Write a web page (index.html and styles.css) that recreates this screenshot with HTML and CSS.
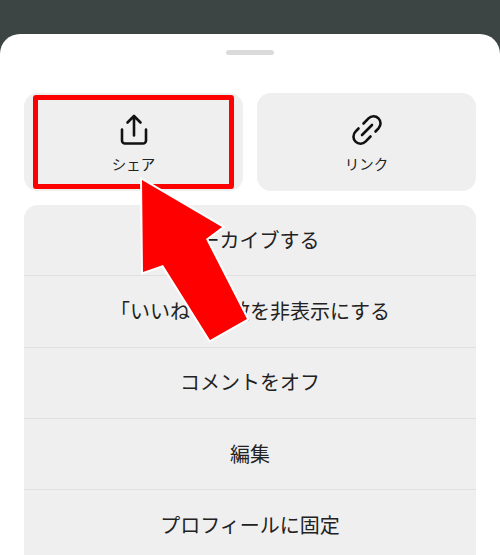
FILE: index.html
```html
<!DOCTYPE html>
<html lang="ja">
<head>
    <meta charset="UTF-8">
    <meta name="viewport" content="width=device-width, initial-scale=1.0">
    <title>シェア</title>
    <link rel="stylesheet" href="styles.css">
</head>
<body>
    <div class="sheet">
        <div class="handle"></div>
        <div class="actions">
            <div class="action">
                <svg class="action-icon" viewBox="0 0 32 32">
                    <path d="M16 21.5V2M9.5 8.5L16 2l6.5 6.5"/>
                    <path d="M4 15.5V26.5a3 3 0 0 0 3 3H25a3 3 0 0 0 3-3V15.5"/>
                </svg>
                <span>シェア</span>
                <div class="highlight"></div>
            </div>
            <div class="action">
                <svg class="action-icon" viewBox="0 0 32 32">
                    <path d="M12.5 9.5L17.5 4.4A7 7 0 0 1 27.5 14.3L24.5 17.5"/>
                    <path d="M19.5 22.5L14.5 27.6A7 7 0 0 1 4.5 17.7L7.5 14.5"/>
                    <path d="M11 21L21 11"/>
                </svg>
                <span>リンク</span>
            </div>
        </div>
        <div class="menu">
            <div class="menu-row">アーカイブする</div>
            <div class="menu-row">「いいね！」数を非表示にする</div>
            <div class="menu-row">コメントをオフ</div>
            <div class="menu-row">編集</div>
            <div class="menu-row">プロフィールに固定</div>
        </div>
    </div>
    <svg class="arrow" viewBox="0 0 500 555">
        <polygon points="142,180 222,227 206,239 247,319 210,340 163,265 143,272"/>
    </svg>
</body>
</html>
```

FILE: styles.css
```css
html, body {
    margin: 0;
    height: 555px;
    overflow: hidden;
}
body {
    position: relative;
    background-color: #3c4444;
    font-family: "Liberation Sans", "Noto Sans CJK JP", sans-serif;
    color: #222;
    padding-top: 34px;
    box-sizing: border-box;
}
.sheet {
    background-color: white;
    border-radius: 20px 20px 0 0;
    height: 521px;
    padding: 16px 24px 0;
    box-sizing: border-box;
    overflow: hidden;
}
.handle {
    width: 48px;
    height: 5px;
    border-radius: 3px;
    background-color: #dbdbdb;
    margin: 0 auto 38px;
}
.actions {
    display: flex;
    gap: 14px;
    margin-bottom: 14px;
}
.action {
    position: relative;
    flex: 1;
    height: 98px;
    border-radius: 14px;
    background-color: #efefef;
    display: flex;
    flex-direction: column;
    align-items: center;
    font-size: 14.5px;
    line-height: 21px;
}
.action-icon {
    width: 32px;
    height: 32px;
    margin-top: 21px;
    margin-bottom: 9px;
    fill: none;
    stroke: #111;
    stroke-width: 2.6;
    stroke-linecap: round;
    stroke-linejoin: round;
}
.highlight {
    position: absolute;
    left: 9px;
    right: 9px;
    top: 2px;
    bottom: 2px;
    border: 5px solid #f00;
    border-radius: 3px;
}
.menu {
    background-color: #efefef;
    border-radius: 14px 14px 0 0;
}
.menu-row {
    height: 71.3px;
    box-sizing: border-box;
    display: flex;
    align-items: center;
    justify-content: center;
    font-size: 20px;
    padding-bottom: 2px;
    border-bottom: 1px solid #e0e0e0;
}
.arrow {
    position: absolute;
    left: 0;
    top: 0;
    width: 500px;
    height: 555px;
}
.arrow polygon {
    fill: #f00;
    stroke: white;
    stroke-width: 4;
    stroke-linejoin: miter;
    paint-order: stroke;
}
```
